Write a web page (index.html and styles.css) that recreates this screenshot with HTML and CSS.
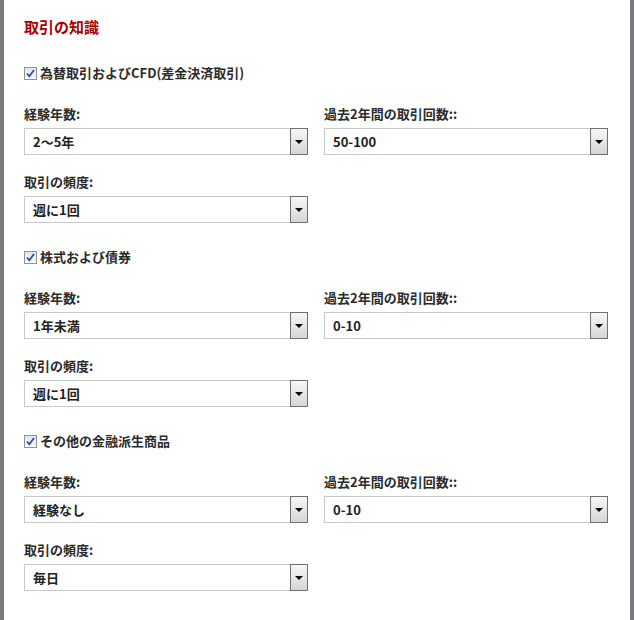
FILE: index.html
```html
<!DOCTYPE html>
<html lang="ja">
<head>
<meta charset="utf-8">
<title>取引の知識</title>
<link rel="stylesheet" href="styles.css">
</head>
<body>
<div class="page">
  <h2 class="title">取引の知識</h2>

  <section class="group">
    <label class="check">
      <span class="box"><svg width="13" height="13" viewBox="0 0 13 13"><path d="M3 6.5 L5.3 9.2 L10 3" fill="none" stroke="#2f4fb0" stroke-width="1.8"/></svg></span>
      <span class="check-text">為替取引およびCFD(差金決済取引)</span>
    </label>
    <div class="fields">
      <div class="field">
        <div class="label">経験年数:</div>
        <div class="select"><span class="value">2～5年</span><span class="btn"><span class="arrow"></span></span></div>
      </div>
      <div class="field">
        <div class="label">過去2年間の取引回数::</div>
        <div class="select"><span class="value">50-100</span><span class="btn"><span class="arrow"></span></span></div>
      </div>
      <div class="field">
        <div class="label">取引の頻度:</div>
        <div class="select"><span class="value">週に1回</span><span class="btn"><span class="arrow"></span></span></div>
      </div>
    </div>
  </section>

  <section class="group">
    <label class="check">
      <span class="box"><svg width="13" height="13" viewBox="0 0 13 13"><path d="M3 6.5 L5.3 9.2 L10 3" fill="none" stroke="#2f4fb0" stroke-width="1.8"/></svg></span>
      <span class="check-text">株式および債券</span>
    </label>
    <div class="fields">
      <div class="field">
        <div class="label">経験年数:</div>
        <div class="select"><span class="value">1年未満</span><span class="btn"><span class="arrow"></span></span></div>
      </div>
      <div class="field">
        <div class="label">過去2年間の取引回数::</div>
        <div class="select"><span class="value">0-10</span><span class="btn"><span class="arrow"></span></span></div>
      </div>
      <div class="field">
        <div class="label">取引の頻度:</div>
        <div class="select"><span class="value">週に1回</span><span class="btn"><span class="arrow"></span></span></div>
      </div>
    </div>
  </section>

  <section class="group">
    <label class="check">
      <span class="box"><svg width="13" height="13" viewBox="0 0 13 13"><path d="M3 6.5 L5.3 9.2 L10 3" fill="none" stroke="#2f4fb0" stroke-width="1.8"/></svg></span>
      <span class="check-text">その他の金融派生商品</span>
    </label>
    <div class="fields">
      <div class="field">
        <div class="label">経験年数:</div>
        <div class="select"><span class="value">経験なし</span><span class="btn"><span class="arrow"></span></span></div>
      </div>
      <div class="field">
        <div class="label">過去2年間の取引回数::</div>
        <div class="select"><span class="value">0-10</span><span class="btn"><span class="arrow"></span></span></div>
      </div>
      <div class="field">
        <div class="label">取引の頻度:</div>
        <div class="select"><span class="value">毎日</span><span class="btn"><span class="arrow"></span></span></div>
      </div>
    </div>
  </section>
</div>
</body>
</html>
```

FILE: styles.css
```css
* { box-sizing: border-box; }
html, body { margin: 0; padding: 0; background: #fff; }
body {
  font-family: "Noto Sans CJK JP", "Liberation Sans", sans-serif;
  font-size: 13px;
  font-weight: bold;
  color: #2b2b2b;
}
.page {
  width: 634px;
  min-height: 620px;
  border-left: 4px solid #7b7b7f;
  border-right: 4px solid #7b7b7f;
  padding: 17px 22px 0 20px;
}
.title {
  margin: 0;
  font-size: 15px;
  line-height: 20px;
  color: #a40000;
  font-weight: bold;
}
.group { margin-top: 26px; }
.group + .group { margin-top: 24px; }
.check {
  display: flex;
  align-items: center;
  height: 20px;
  gap: 3px;
}
.box {
  width: 13px;
  height: 13px;
  border: 1px solid #8e8f9f;
  background: linear-gradient(#e4e4ea, #fafafc);
  display: flex;
  align-items: center;
  justify-content: center;
}
.box svg { display: block; margin: -1px; }
.check-text { line-height: 20px; }
.fields {
  margin-top: 23px;
  display: grid;
  grid-template-columns: 284px 284px;
  column-gap: 16px;
  row-gap: 19px;
}
.label {
  line-height: 16px;
  margin-bottom: 6px;
}
.select {
  display: flex;
  height: 27px;
  border: 1px solid #c9c9c9;
  background: #fff;
}
.value {
  flex: 1;
  padding-left: 8px;
  line-height: 25px;
  color: #222;
}
.btn {
  width: 18px;
  margin: -1px -1px -1px 0;
  border: 1px solid #707070;
  background: linear-gradient(#f7f7f7, #d6d6d6);
  display: flex;
  align-items: center;
  justify-content: center;
}
.arrow {
  width: 0;
  height: 0;
  border-left: 4px solid transparent;
  border-right: 4px solid transparent;
  border-top: 4px solid #000;
}
```
